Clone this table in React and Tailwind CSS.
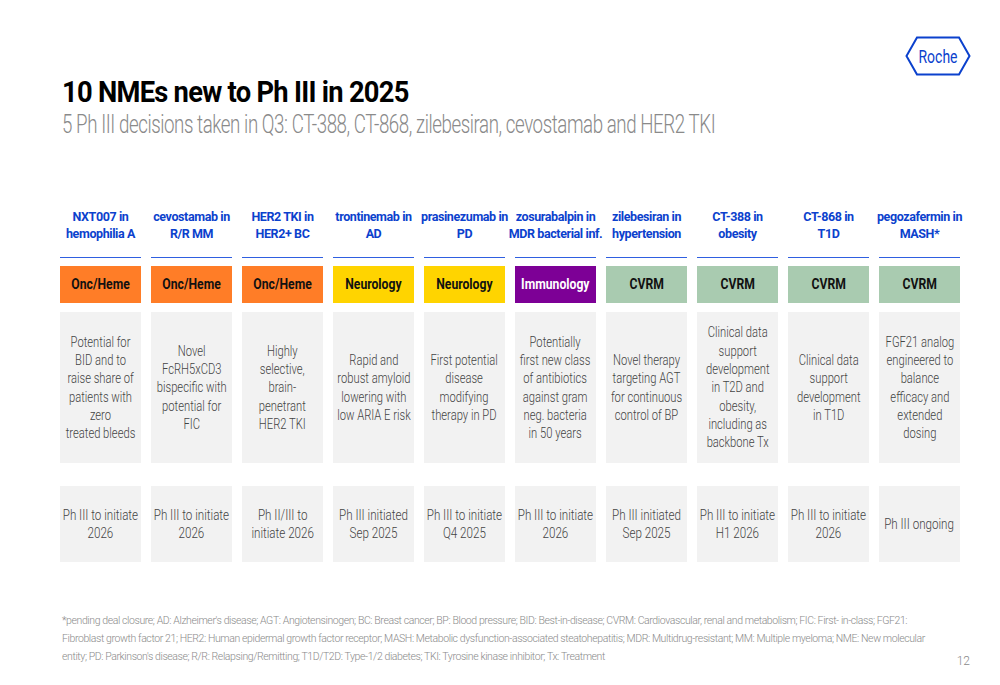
const columns = [
  { head: ["NXT007 in", "hemophilia A"], cat: "Onc/Heme", tone: "orange", desc: ["Potential for", "BID and to", "raise share of", "patients with", "zero", "treated bleeds"], status: ["Ph III to initiate", "2026"] },
  { head: ["cevostamab in", "R/R MM"], cat: "Onc/Heme", tone: "orange", desc: ["Novel", "FcRH5xCD3", "bispecific with", "potential for", "FIC"], status: ["Ph III to initiate", "2026"] },
  { head: ["HER2 TKI in", "HER2+ BC"], cat: "Onc/Heme", tone: "orange", desc: ["Highly", "selective,", "brain-", "penetrant", "HER2 TKI"], status: ["Ph II/III to", "initiate 2026"] },
  { head: ["trontinemab in", "AD"], cat: "Neurology", tone: "yellow", desc: ["Rapid and", "robust amyloid", "lowering with", "low ARIA E risk"], status: ["Ph III initiated", "Sep 2025"] },
  { head: ["prasinezumab in", "PD"], cat: "Neurology", tone: "yellow", desc: ["First potential", "disease", "modifying", "therapy in PD"], status: ["Ph III to initiate", "Q4 2025"] },
  { head: ["zosurabalpin in", "MDR bacterial inf."], cat: "Immunology", tone: "purple", desc: ["Potentially", "first new class", "of antibiotics", "against gram", "neg. bacteria", "in 50 years"], status: ["Ph III to initiate", "2026"] },
  { head: ["zilebesiran in", "hypertension"], cat: "CVRM", tone: "green", desc: ["Novel therapy", "targeting AGT", "for continuous", "control of BP"], status: ["Ph III initiated", "Sep 2025"] },
  { head: ["CT-388 in", "obesity"], cat: "CVRM", tone: "green", desc: ["Clinical data", "support", "development", "in T2D and", "obesity,", "including as", "backbone Tx"], status: ["Ph III to initiate", "H1 2026"] },
  { head: ["CT-868 in", "T1D"], cat: "CVRM", tone: "green", desc: ["Clinical data", "support", "development", "in T1D"], status: ["Ph III to initiate", "2026"] },
  { head: ["pegozafermin in", "MASH*"], cat: "CVRM", tone: "green", desc: ["FGF21 analog", "engineered to", "balance", "efficacy and", "extended", "dosing"], status: ["Ph III ongoing"] },
];

const toneClass = {
  orange: "bg-[#ff7d27] text-[#111]",
  yellow: "bg-[#ffd400] text-[#111]",
  purple: "bg-[#7d0096] text-white",
  green: "bg-[#a9cbb0] text-[#111]",
};

const RocheLogo = () => (
  <svg width="66" height="40" viewBox="0 0 66 40">
    <polygon points="12,1.5 54,1.5 64.5,20 54,38.5 12,38.5 1.5,20" fill="none" stroke="#0b41cd" strokeWidth="2" />
    <text x="33" y="27" textAnchor="middle" fontFamily="Roboto, sans-serif" fontSize="19" fill="#0b41cd" textLength="39" lengthAdjust="spacingAndGlyphs">Roche</text>
  </svg>
);

export default function App() {
  return (
    <div className="w-[1000px] h-[685px] bg-white overflow-hidden font-['Roboto',sans-serif] text-[#111]">
      {/* logo */}
      <div className="flex justify-end pr-[29px] pt-[36px]">
        <RocheLogo />
      </div>

      {/* title */}
      <div className="pl-[62px] -mt-[2px] whitespace-nowrap">
        <h1 className="text-[30px] leading-[36px] font-bold tracking-[-0.8px] text-black">
          <span className="inline-block origin-left scale-x-[0.91]">10 NMEs new to Ph III in 2025</span>
        </h1>
        <p className="text-[26px] leading-[28px] font-light tracking-[-0.6px] text-[#8a8a8a]">
          <span className="inline-block origin-left scale-x-[0.72]">
            5 Ph III decisions taken in Q3: CT-388, CT-868, zilebesiran, cevostamab and HER2 TKI
          </span>
        </p>
      </div>

      {/* table */}
      <div className="mt-[65px] ml-[60px] w-[900px] grid grid-cols-10 gap-x-[10px]">
        {columns.map((c, i) => (
          <div key={i} className="flex flex-col">
            <div className="h-[55px] pb-[15px] flex flex-col items-center justify-end border-b-[1.5px] border-[#2f5fe0] text-[12.5px] leading-[17px] font-bold text-[#0b41cd] text-center tracking-[-0.4px] whitespace-nowrap">
              {c.head.map((l, j) => <span key={j}>{l}</span>)}
            </div>
            <div className={`mt-[8px] h-[37px] flex items-center justify-center text-[14px] font-bold whitespace-nowrap ${toneClass[c.tone]}`}>
              <span className="inline-block scale-x-[0.87]">{c.cat}</span>
            </div>
            <div className="mt-[9px] h-[151px] bg-[#f2f2f2] flex items-center justify-center text-[14px] leading-[18.3px] font-light text-[#444] text-center whitespace-nowrap">
              <div className="flex flex-col items-center scale-x-[0.8]">
                {c.desc.map((l, j) => <span key={j}>{l}</span>)}
              </div>
            </div>
            <div className="mt-[23px] h-[76px] bg-[#f2f2f2] flex items-center justify-center text-[14px] leading-[18px] font-light text-[#444] text-center whitespace-nowrap">
              <div className="flex flex-col items-center scale-x-[0.83]">
                {c.status.map((l, j) => <span key={j}>{l}</span>)}
              </div>
            </div>
          </div>
        ))}
      </div>

      {/* footnote */}
      <div className="mt-[50px] ml-[62px] mr-[30px] flex items-end justify-between">
        <p className="w-[885px] text-[10.5px] leading-[18px] font-light text-[#8a8a8a] tracking-[-0.4px]">
          *pending deal closure; AD: Alzheimer's disease; AGT: Angiotensinogen; BC: Breast cancer; BP: Blood pressure; BID: Best-in-disease; CVRM: Cardiovascular, renal and metabolism; FIC: First- in-class; FGF21: Fibroblast growth factor 21; HER2: Human epidermal growth factor receptor; MASH: Metabolic dysfunction-associated steatohepatitis; MDR: Multidrug-resistant; MM: Multiple myeloma; NME: New molecular entity; PD: Parkinson's disease; R/R: Relapsing/Remitting; T1D/T2D: Type-1/2 diabetes; TKI: Tyrosine kinase inhibitor; Tx: Treatment
        </p>
        <span className="text-[12px] font-light text-[#8a8a8a] -mb-[4px]">12</span>
      </div>
    </div>
  );
}
